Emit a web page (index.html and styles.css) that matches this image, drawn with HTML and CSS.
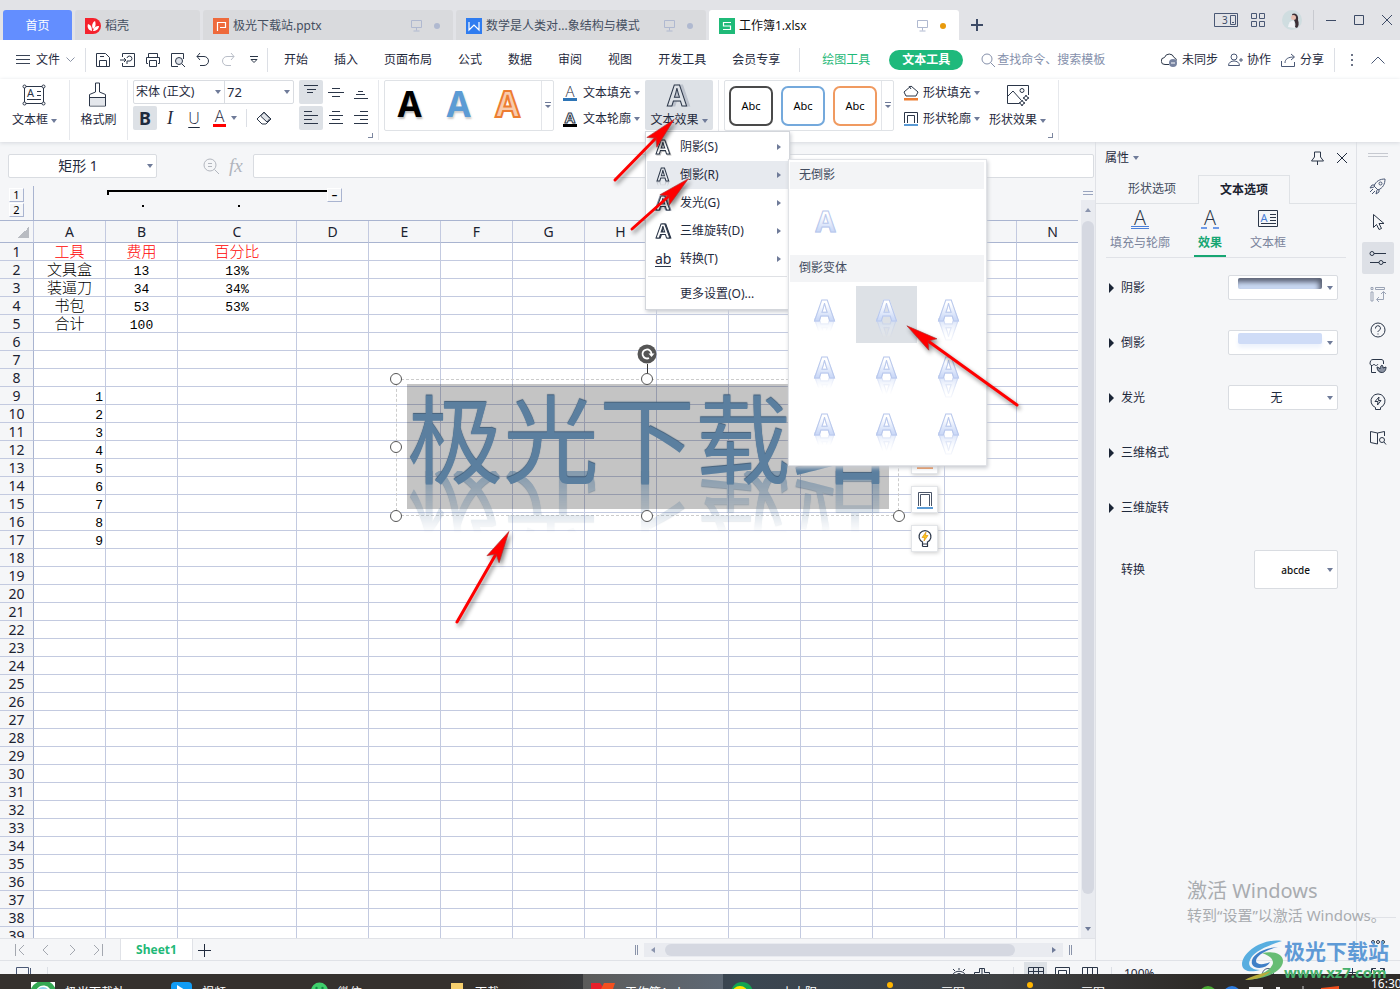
FILE: index.html
```html
<!DOCTYPE html>
<html lang="zh-CN">
<head>
<meta charset="utf-8">
<title>工作簿1.xlsx</title>
<link rel="stylesheet" href="styles.css">
</head>
<body>
<svg class="defs" aria-hidden="true">
  <defs>
    <marker id="head" markerUnits="userSpaceOnUse" markerWidth="60" markerHeight="40" orient="auto" overflow="visible"><path d="M0 0 L-6 -7 L26 0 L-6 7Z" fill="#f00" stroke="#a33" stroke-width=".6"/></marker>
    <symbol id="i-monitor" viewBox="0 0 12 12"><path d="M.5 .5h10v7h-10zM5.500 7.500v3M2.500 11h6" fill="none" stroke="#b0b9d0"/></symbol>
    <symbol id="i-plus" viewBox="0 0 14 14"><path d="M7.500 1v13M1 7.500h13" fill="none" stroke="currentColor"/></symbol>
    <symbol id="i-x" viewBox="0 0 12 12"><path d="M1 1l10 10M11 1L1 11" fill="none" stroke="currentColor"/></symbol>
    <symbol id="i-outline" viewBox="0 0 16 16"><path d="M1.500 12V1.500h13V12M4.500 12V4.500h7V12" fill="none" stroke="#2b3648"/><path d="M1 13h14v2H1z" fill="#5b9bd5"/></symbol>
  </defs>
</svg>
<div class="app">
  <header class="titlebar">
    <nav class="doc-tabs">
      <button class="doc-tab home">首页</button>
      <button class="doc-tab shell"><svg width="16" height="16" viewBox="0 0 16 16"><path d="M0 3V0h8a8 8 0 1 1 0 16H0z" fill="#f5222d"/><path d="M7 13C3 12 2 9 3 6c3 1 4 3 4 7zM8 11C6 7 8 4 10 3c1 3 1 6-2 8zM8 13c1-4 3-5 6-5 0 3-3 5-6 5z" fill="#fff"/></svg>稻壳</button>
      <button class="doc-tab doc"><svg width="16" height="16" viewBox="0 0 16 16"><path d="M0 0h16v16H0z" fill="#ee6a3c"/><path d="M4.500 13V4.500h8v5H7" fill="none" stroke="#fff" stroke-width="1.200"/></svg><span class="doc-name">极光下载站.pptx</span><svg width="12" height="12"><use href="#i-monitor"/></svg><i class="dot"></i></button>
      <button class="doc-tab doc"><svg width="16" height="16" viewBox="0 0 16 16"><path d="M0 0h16v16H0z" fill="#2f7cf0"/><path d="M3 4v8l5-5 5 5V4" fill="none" stroke="#fff" stroke-width="1.200"/></svg><span class="doc-name">数学是人类对...象结构与模式</span><svg width="12" height="12"><use href="#i-monitor"/></svg><i class="dot"></i></button>
      <button class="doc-tab doc active"><svg width="16" height="16" viewBox="0 0 16 16"><path d="M0 0h16v16H0z" fill="#1fba78"/><path d="M12 4.500H4.500v3.500h7v3.500H4" fill="none" stroke="#fff" stroke-width="1.200"/></svg><span class="doc-name">工作簿1.xlsx</span><svg width="12" height="12"><use href="#i-monitor"/></svg><i class="dot"></i></button>
      <button class="new-tab" aria-label="新建"><svg width="14" height="14" viewBox="0 0 14 14"><path d="M7 1v12M1 7h12" stroke="#3d4b66" stroke-width="2"/></svg></button>
    </nav>
    <div class="window-tools">
      <svg class="count" width="24" height="14" viewBox="0 0 24 14"><path d="M.5 .5h23v13H.5zM16.500 2.500h5v9h-5zM18 9.500h2" fill="none" stroke="#4a5875"/><text x="8" y="11" font-size="10" fill="#3d4b66">3</text></svg>
      <svg width="15" height="15" viewBox="0 0 15 15"><path d="M.5 .5h5v5h-5zM8.500 .5h5v5h-5zM.5 8.500h5v5h-5zM8.500 8.500h5v5h-5z" fill="none" stroke="#4a5875"/></svg>
      <svg width="20" height="20" viewBox="0 0 20 20"><circle cx="10" cy="10" r="10" fill="#cfdde0"/><path d="M10 4c4-2 7 2 6 6 1 3 1 6-1 8l-2-1c1-3 0-5-1-7z" fill="#3b3036"/><circle cx="11.500" cy="7.500" r="2.500" fill="#e8bfb0"/><path d="M6 17c1-5 3-7 6-6l1 7z" fill="#f1f3f6"/></svg>
      <i class="vline"></i>
      <button aria-label="最小化"><svg width="12" height="12" viewBox="0 0 12 12"><path d="M1 6.500h10" stroke="#3d4b66"/></svg></button>
      <button aria-label="最大化"><svg width="12" height="12" viewBox="0 0 12 12"><path d="M1.500 1.500h9v9h-9z" fill="none" stroke="#3d4b66"/></svg></button>
      <button aria-label="关闭"><svg width="12" height="12"><use href="#i-x"/></svg></button>
    </div>
  </header>

  <div class="menubar">
    <button class="file"><svg width="14" height="11" viewBox="0 0 14 11"><path d="M0 1.500h14M0 5.500h14M0 9.500h14" stroke="#3a4456"/></svg>文件<svg width="9" height="6" viewBox="0 0 9 6"><path d="M.5 .5l4 4 4-4" fill="none" stroke="#8a93a5"/></svg></button>
    <i class="vline"></i>
    <div class="quick">
      <button aria-label="保存"><svg width="16" height="16" viewBox="0 0 16 16"><path d="M1.500 1.500h9l4 4v9h-13zM4.500 14V8.500h7V14M5 4.500h4" fill="none" stroke="#2b3648"/></svg></button>
      <button aria-label="输出"><svg width="16" height="16" viewBox="0 0 16 16"><path d="M2.500 5V1.500h12v13h-12V11M0 8h6M4 6l2 2-2 2M7 12V9h3a2.500 2.500 0 1 0-3-3" fill="none" stroke="#2b3648"/></svg></button>
      <button aria-label="打印"><svg width="16" height="16" viewBox="0 0 16 16"><path d="M3.500 5V1.500h9V5M3 11.500H1.500v-6h13v6H13M4.500 8.500h7v6h-7z" fill="none" stroke="#2b3648"/></svg></button>
      <button aria-label="预览"><svg width="16" height="16" viewBox="0 0 16 16"><path d="M8 14.500H1.500v-13h12V7M12 12l3 3" fill="none" stroke="#2b3648"/><circle cx="9" cy="9" r="3.500" fill="#dfe3ea" stroke="#2b3648"/></svg></button>
      <button aria-label="撤销"><svg width="16" height="16" viewBox="0 0 16 16"><path d="M5 1L2 4.500 5 8M2 4.500h7a4.500 4.500 0 0 1 0 9H5" fill="none" stroke="#2b3648"/></svg></button>
      <button aria-label="恢复"><svg width="16" height="16" viewBox="0 0 16 16"><path d="M11 1l3 3.500L11 8M14 4.500H7a4.500 4.500 0 0 0 0 9h4" fill="none" stroke="#b9bec8"/></svg></button>
      <button aria-label="更多"><svg width="8" height="8" viewBox="0 0 8 8"><path d="M0 .5h8M1 3.500l3 3 3-3z" fill="none" stroke="#2b3648"/></svg></button>
    </div>
    <i class="vline"></i>
    <nav class="ribbon-tabs">
      <button>开始</button><button>插入</button><button>页面布局</button><button>公式</button><button>数据</button><button>审阅</button><button>视图</button><button>开发工具</button><button>会员专享</button>
    </nav>
    <i class="vline"></i>
    <button class="draw-tab">绘图工具</button>
    <button class="text-tab">文本工具</button>
    <label class="search"><svg width="14" height="14" viewBox="0 0 14 14"><circle cx="6" cy="6" r="5" fill="none" stroke="#8691ab"/><path d="M9.500 9.500L14 14" stroke="#8691ab"/></svg><input type="text" placeholder="查找命令、搜索模板"></label>
    <div class="share-tools">
      <button><svg width="17" height="16" viewBox="0 0 17 16"><path d="M8 12.500H4a3.500 3.500 0 0 1-.5-7 5 5 0 0 1 9.500 0 3.500 3.500 0 0 1 2.500 3" fill="none" stroke="#2b3648"/><circle cx="12" cy="11" r="4" fill="#7783a0"/><path d="M10 11h4" stroke="#fff"/></svg>未同步</button>
      <button><svg width="15" height="14" viewBox="0 0 15 14"><circle cx="6" cy="4" r="3" fill="none" stroke="#4a5875"/><path d="M.5 12.500c0-6 11-6 11 0zM11 7h4M13 5v4" fill="none" stroke="#4a5875"/></svg>协作</button>
      <button><svg width="15" height="14" viewBox="0 0 15 14"><path d="M.5 8v5.500h13V9M4 10c0-4 3-6 9-6M10 1l3.500 3L10 7" fill="none" stroke="#4a5875"/></svg>分享</button>
      <i class="vline"></i>
      <svg class="dots" width="4" height="14" viewBox="0 0 4 14"><path d="M1 1h2v2H1zM1 6h2v2H1zM1 11h2v2H1z" fill="#6b7386"/></svg>
      <svg width="14" height="8" viewBox="0 0 14 8"><path d="M.5 7.500L7 1l6.500 6.500" fill="none" stroke="#4a5875"/></svg>
    </div>
  </div>

  <div class="ribbon">
    <div class="group g-textbox"><button class="big"><svg width="24" height="22" viewBox="0 0 24 22"><path d="M2.500 2.500h19v17h-19zM15 7.500h4M15 11.500h4M5 15.500h14" fill="none" stroke="#2b3648"/><g fill="#fff" stroke="#2b3648"><circle cx="2.500" cy="2.500" r="1.500"/><circle cx="21.500" cy="2.500" r="1.500"/><circle cx="2.500" cy="19.500" r="1.500"/><circle cx="21.500" cy="19.500" r="1.500"/></g><text x="5" y="13" font-size="11" fill="#2b3648">A</text></svg><span>文本框<i class="caret"></i></span></button></div>
    <div class="group g-brush"><button class="big"><svg width="20" height="26" viewBox="0 0 20 26"><path d="M7.500 1h4v9l6 2.500v11.500h-16V12.500l6-2.500z" fill="none" stroke="#2b3648"/><path d="M2 16h15v7.500H2z" fill="#e4e7ec"/><path d="M1 15.500h17" stroke="#2b3648"/></svg><span>格式刷</span></button></div>
    <div class="group g-font">
      <div class="stack">
        <div class="font-row"><label class="combo font-name"><select aria-label="字体"><option>宋体 (正文)</option></select><i class="caret"></i></label><label class="combo font-size"><select aria-label="字号"><option>72</option></select><i class="caret"></i></label></div>
        <div class="format-row">
          <button class="sq on bold">B</button><button class="sq italic">I</button><button class="sq under">U</button>
          <button class="color-btn"><span>A</span><i class="caret"></i></button><i class="vline"></i>
          <button class="sq" aria-label="清除格式"><svg width="16" height="14" viewBox="0 0 16 14"><path d="M1 8l7-7 7 7-5 5H6z" fill="none" stroke="#2b3648"/><path d="M4.500 5L8 1.500l6 6L11 11z" fill="#e0e3e8" stroke="#2b3648"/></svg></button>
        </div>
      </div>
      <div class="aligns">
        <button class="sq on" aria-label="顶端对齐"><svg width="14" height="16" viewBox="0 0 14 16"><path d="M0 1.500h14M3 5.500h9M3 8.500h6" stroke="#2b3648"/></svg></button>
        <button class="sq" aria-label="垂直居中"><svg width="16" height="16" viewBox="0 0 16 16"><path d="M4 4.500h8M0 8.500h16M4 12.500h8" stroke="#2b3648"/></svg></button>
        <button class="sq" aria-label="底端对齐"><svg width="14" height="16" viewBox="0 0 14 16"><path d="M4 7.500h5M2 10.500h9M0 14.500h14" stroke="#2b3648"/></svg></button>
        <button class="sq on" aria-label="左对齐"><svg width="14" height="14" viewBox="0 0 14 14"><path d="M0 .5h8M0 4.500h14M0 8.500h8M0 12.500h14" stroke="#2b3648"/></svg></button>
        <button class="sq" aria-label="居中"><svg width="14" height="14" viewBox="0 0 14 14"><path d="M3 .5h8M0 4.500h14M3 8.500h8M0 12.500h14" stroke="#2b3648"/></svg></button>
        <button class="sq" aria-label="右对齐"><svg width="14" height="14" viewBox="0 0 14 14"><path d="M6 .5h8M0 4.500h14M6 8.500h8M0 12.500h14" stroke="#2b3648"/></svg></button>
      </div>
      <i class="corner"></i>
    </div>
    <div class="group g-text">
      <div class="gallery art"><div class="cells"><button class="art-black">A</button><button class="art-blue">A</button><button class="art-orange">A</button></div><button class="more" aria-label="更多样式"><i class="caret"></i></button></div>
      <div class="stack list">
        <button class="row-btn"><span class="ic-a fill">A</span>文本填充<i class="caret"></i></button>
        <button class="row-btn"><span class="ic-a line">A</span>文本轮廓<i class="caret"></i></button>
      </div>
      <div class="effect-wrap">
        <button class="big effect"><span class="hollow">A</span><span>文本效果<i class="caret"></i></span></button>
        <div class="menu">
          <button><span class="m-a shade">A</span>阴影(S)<i class="arrow"></i></button>
          <button class="hover"><span class="m-a refl">A</span>倒影(R)<i class="arrow"></i></button>
          <button><span class="m-a glow">A</span>发光(G)<i class="arrow"></i></button>
          <button><span class="m-a rot">A</span>三维旋转(D)<i class="arrow"></i></button>
          <button><span class="m-ab">ab</span>转换(T)<i class="arrow"></i></button>
          <hr>
          <button class="more-set"><span class="m-a"></span>更多设置(O)...</button>
          <div class="submenu">
            <h3>无倒影</h3>
            <div class="none-row"><button class="cell"><span>A</span></button></div>
            <h3>倒影变体</h3>
            <div class="variants">
              <button class="cell r1"><span>A</span></button><button class="cell r2 picked"><span>A</span></button><button class="cell r3"><span>A</span></button>
              <button class="cell r1"><span>A</span></button><button class="cell r2"><span>A</span></button><button class="cell r3"><span>A</span></button>
              <button class="cell r1"><span>A</span></button><button class="cell r2"><span>A</span></button><button class="cell r3"><span>A</span></button>
            </div>
          </div>
        </div>
      </div>
    </div>
    <div class="group g-shape">
      <div class="gallery abc"><div class="cells"><button class="k">Abc</button><button class="b">Abc</button><button class="o">Abc</button></div><button class="more" aria-label="更多样式"><i class="caret"></i></button></div>
      <div class="stack list">
        <button class="row-btn"><svg width="16" height="16" viewBox="0 0 16 16"><path d="M1 7l7-6 7 6-2 4H3zM6 1l2 3" fill="none" stroke="#2b3648"/><path d="M1 13h14v2.500H1z" fill="#ed7d31"/></svg>形状填充<i class="caret"></i></button>
        <button class="row-btn"><svg width="16" height="16"><use href="#i-outline"/></svg>形状轮廓<i class="caret"></i></button>
      </div>
      <button class="big shape-effect"><svg width="24" height="22" viewBox="0 0 24 22"><path d="M13 19.500H1.500v-18h21V11M2 12l5-5 8 9" fill="none" stroke="#2b3648"/><circle cx="16" cy="6.500" r="2" fill="none" stroke="#2b3648"/><path d="M20 11l1 2 2 1-2 1-1 2-1-2-2-1 2-1zM16 16l1 2 2 1-2 1-1 2-1-2-2-1 2-1z" fill="#fff" stroke="#2b3648"/></svg><span>形状效果<i class="caret"></i></span></button>
      <i class="corner"></i>
    </div>
  </div>

  <main class="workspace">
    <section class="book">
      <div class="formula-bar">
        <label class="combo name-box"><select aria-label="名称框"><option>矩形 1</option></select><i class="caret"></i></label>
        <div class="fx-tools"><svg width="17" height="17" viewBox="0 0 17 17"><circle cx="7" cy="7" r="6" fill="none" stroke="#b3b7bf"/><path d="M5 5.500h4M5 8.500h4M11.500 11.500L16 16" stroke="#b3b7bf" fill="none"/></svg><span class="fx">fx</span></div>
        <input class="formula" type="text" aria-label="编辑栏">
      </div>
      <div class="sheet-row">
        <div class="sheet">
          <div class="outline">
            <div class="levels"><button>1</button><button>2</button></div>
            <div class="bracket-area"><div class="bracket"></div><button class="minus">–</button><i class="pt pt-b"></i><i class="pt pt-c"></i></div>
          </div>
          <div class="grid-wrap">
            <table class="grid"><thead></thead><tbody></tbody></table>
            <div class="shape">
              <div class="selection"></div>
              <div class="wordart">极光下载站</div>
              <i class="stem"></i>
              <svg class="rotate" width="20" height="20" viewBox="0 0 20 20"><circle cx="10" cy="10" r="9.500" fill="#555"/><path d="M12 14a4.500 4.500 0 1 1 2.500-4" fill="none" stroke="#fff" stroke-width="1.800"/><path d="M11.500 9.500h6l-3 3.500z" fill="#fff"/></svg>
              <i class="knob tl"></i><i class="knob tc"></i><i class="knob ml"></i><i class="knob bl"></i><i class="knob bc"></i><i class="knob br"></i>
              <div class="float-tools">
                <button aria-label="形状填充"><svg width="16" height="20" viewBox="0 0 16 20"><path d="M2 7l6-5 6 5-2 6H4z" fill="none" stroke="#2b3648"/><path d="M0 16h16v2H0z" fill="#ed7d31"/></svg></button>
                <button aria-label="形状轮廓"><svg width="16" height="18" viewBox="0 0 16 18"><path d="M1.500 15V1.500h13V15M3.500 15V3.500h9V15" fill="none" stroke="#4a5568"/><path d="M0 16h16v2H0z" fill="#5b9bd5"/></svg></button>
                <button aria-label="智能"><svg width="16" height="20" viewBox="0 0 16 20"><path d="M5.500 15v-2a6 6 0 1 1 5 0v2zM5.500 17.500h5v-2.500M5.500 15v2.500" fill="#fff" stroke="#2b3648" stroke-width="1.200"/><path d="M9 3L5 8.500h2.500L7 12l4-5.500H8.500z" fill="#ffc61a" stroke="#d98a00" stroke-width=".6"/></svg></button>
              </div>
            </div>
          </div>
        </div>
        <div class="vscroll"><i class="split"></i><div class="track"><i class="caret up"></i><i class="thumb"></i><i class="caret"></i></div></div>
      </div>
      <div class="sheet-tabs">
        <div class="navs">
          <svg width="10" height="12" viewBox="0 0 10 12"><path d="M.5 0v12M9 1L4 6l5 5" fill="none" stroke="#a4a8b0"/></svg>
          <svg width="10" height="12" viewBox="0 0 10 12"><path d="M7 1L2 6l5 5" fill="none" stroke="#a4a8b0"/></svg>
          <svg width="10" height="12" viewBox="0 0 10 12"><path d="M3 1l5 5-5 5" fill="none" stroke="#a4a8b0"/></svg>
          <svg width="10" height="12" viewBox="0 0 10 12"><path d="M9.500 0v12M1 1l5 5-5 5" fill="none" stroke="#a4a8b0"/></svg>
        </div>
        <button class="sheet-tab">Sheet1</button>
        <button class="add-sheet" aria-label="新建工作表"><svg width="14" height="14"><use href="#i-plus"/></svg></button>
        <div class="hscroll"><i class="grip"></i><div class="track"><i class="arrow left"></i><i class="thumb"></i><i class="arrow"></i></div><i class="grip"></i></div>
      </div>
    </section>

    <aside class="panel">
      <div class="panel-head"><span>属性<i class="caret"></i></span><div class="panel-acts"><svg width="13" height="14" viewBox="0 0 13 14"><path d="M3.500 1h6v5l3 4H.5l3-4zM6.500 10v4" fill="none" stroke="#2b3648"/></svg><button aria-label="关闭"><svg width="12" height="12"><use href="#i-x"/></svg></button></div></div>
      <div class="panel-tabs"><button>形状选项</button><button class="active">文本选项</button></div>
      <div class="sub-tabs">
        <button class="wide"><span class="thin-a bar">A</span>填充与轮廓</button>
        <button class="active"><span class="thin-a dashes">A</span>效果</button>
        <button class="frame"><svg width="20" height="20" viewBox="0 0 20 20"><path d="M.5 1.500h19v16H.5zM12 5.500h6M12 8.500h6M12 11.500h6M3 14.500h15" fill="none" stroke="#2b3648"/><text x="2.500" y="12.500" font-size="11" fill="#4a7fd8">A</text></svg>文本框</button>
      </div>
      <div class="props">
        <div class="prop"><i class="tri"></i><span>阴影</span><button class="pick" aria-label="阴影"><i class="sw sw-shadow"></i><i class="caret"></i></button></div>
        <div class="prop"><i class="tri"></i><span>倒影</span><button class="pick" aria-label="倒影"><i class="sw sw-refl"></i><i class="caret"></i></button></div>
        <div class="prop"><i class="tri"></i><label for="glow">发光</label><div class="combo pick"><select id="glow"><option>无</option></select><i class="caret"></i></div></div>
        <div class="prop"><i class="tri"></i><span>三维格式</span></div>
        <div class="prop"><i class="tri"></i><span>三维旋转</span></div>
        <div class="prop last"><i class="tri hidden"></i><span>转换</span><button class="pick tall">abcde<i class="caret"></i></button></div>
      </div>
    </aside>

    <aside class="rail">
      <i class="handle"></i>
      <button aria-label="推荐"><svg width="18" height="18" viewBox="0 0 18 18"><path d="M5 9c2-5 6-7 11-7 0 5-2 9-7 11zM6 8H3l-2 3 4-1M10 12v3l-3 2 1-4M4 12l-3 3M6 14l-3 3" fill="none" stroke="#4a5875"/><circle cx="11.500" cy="6.500" r="1.500" fill="none" stroke="#4a5875"/></svg></button>
      <button aria-label="选择"><svg width="16" height="18" viewBox="0 0 16 18"><path d="M3.500 1.500v13l3-3 2.500 5 2.500-1-2.500-5h5z" fill="none" stroke="#2b3648"/></svg></button>
      <button class="on" aria-label="属性"><svg width="18" height="16" viewBox="0 0 18 16"><path d="M5 3.500h12M1 12.500h9M14 12.500h3" stroke="#2b3648"/><circle cx="3" cy="3.500" r="2" fill="none" stroke="#2b3648"/><circle cx="12" cy="12.500" r="2" fill="none" stroke="#2b3648"/></svg></button>
      <button aria-label="样式"><svg width="16" height="16" viewBox="0 0 16 16"><path d="M1 1.500h2v2H1zM5.500 1.500h9v2h-9zM1 6h2v9H1zM13.500 6v7.500H7M11 8l2.500-2.500L16 8M9 11l-2.500 2.500L9 16" fill="none" stroke="#9aa3b5"/></svg></button>
      <button aria-label="帮助"><svg width="16" height="16" viewBox="0 0 16 16"><circle cx="8" cy="8" r="7" fill="none" stroke="#2b3648"/><path d="M5.500 6.500a2.500 2.500 0 1 1 3.500 2c-1 .5-1 1-1 1.500M8 11.500v1" fill="none" stroke="#2b3648"/></svg></button>
      <button aria-label="素材"><svg width="18" height="16" viewBox="0 0 18 16"><path d="M7 14.500H2.500V7M14.500 6V4c0-2-1-2.500-2.500-2.500H4C2 1.500 1 3 1 6c1 2 3 2 4 0 1 2 3 2 4 0" fill="none" stroke="#2b3648"/><path d="M8 9c1.500 0 2 1 3 2 0-2 1-3.500 2-4 1 1 1 2 1 3l3-1c0 4-2 5.500-4 5.500-3 0-5-2-5-5.500z" fill="#8b93a3" stroke="#2b3648"/></svg></button>
      <button aria-label="灵感"><svg width="16" height="18" viewBox="0 0 16 18"><path d="M5.500 14.500a7 7 0 1 1 5 0v2h-5z" fill="none" stroke="#2b3648"/><path d="M9 4L5 8.500h3L7.500 12l3.500-4.500H8.500z" fill="none" stroke="#2b3648"/></svg></button>
      <button aria-label="查阅"><svg width="18" height="16" viewBox="0 0 18 16"><path d="M8.500 14l-7-1.500V1.500l7 1.500 7-1.500V6M8.500 3v11" fill="none" stroke="#2b3648"/><circle cx="13" cy="10" r="2.500" fill="none" stroke="#2b3648"/><path d="M15 12l2 2.500" stroke="#2b3648"/></svg></button>
      <div class="rail-end"><svg width="16" height="6" viewBox="0 0 16 6"><g fill="none" stroke="#2b3648"><circle cx="3" cy="3" r="1.500"/><circle cx="8" cy="3" r="1.500"/><circle cx="13" cy="3" r="1.500"/></g></svg></div>
    </aside>
  </main>

  <footer class="status">
    <svg class="rec" width="17" height="14" viewBox="0 0 17 14"><path d="M.5 14V.5h12V14M14.500 1v13" fill="none" stroke="#4a5875"/></svg>
    <i class="vline"></i>
    <div class="views">
      <svg width="16" height="14" viewBox="0 0 16 14"><path d="M1 7c4-5 10-5 14 0M8 0v2M2 1l2 2M14 1l-2 2" fill="none" stroke="#2b3648"/><circle cx="8" cy="8" r="2.500" fill="none" stroke="#2b3648"/></svg>
      <svg class="cross" width="16" height="14" viewBox="0 0 16 14"><path d="M.5 14V4.500h5v-4h5v4h5V14M8 1v13" fill="none" stroke="#2b3648"/></svg>
      <i class="vline"></i>
      <span class="view on"><svg width="16" height="12" viewBox="0 0 16 12"><path d="M.5 .5h15v11H.5zM0 4.500h16M5.500 0v12M10.500 0v12" fill="none" stroke="#2b3648"/></svg></span>
      <span class="view"><svg width="15" height="12" viewBox="0 0 15 12"><path d="M.5 12V.5h14V12M3.500 12V3.500h8V12" fill="none" stroke="#2b3648"/></svg></span>
      <span class="view"><svg width="16" height="12" viewBox="0 0 16 12"><path d="M.5 .5h15v11H.5zM5.500 0v12M10.500 0v12" fill="none" stroke="#2b3648"/></svg></span>
      <i class="vline"></i>
      <span class="zoom">100%</span>
      <svg class="slider" width="12" height="12" viewBox="0 0 12 12"><circle cx="6" cy="6" r="5.500" fill="#fff" stroke="#4a5875"/></svg>
      <svg class="plus" width="9" height="9" viewBox="0 0 9 9"><path d="M4.500 0v9M0 4.500h9" stroke="#2b3648"/></svg>
      <svg class="full" width="14" height="14" viewBox="0 0 14 14"><path d="M.5 5V.5H5M9 .5h4.500V5M1 1l4 4M13 1L9 5" fill="none" stroke="#2b3648"/></svg>
    </div>
  </footer>

  <footer class="taskbar">
    <div class="task"><svg width="24" height="15" viewBox="0 0 24 15"><path d="M0 0h24v15H0z" fill="#fff"/><path d="M2 8C8-2 20-1 23 10" fill="none" stroke="#34a853" stroke-width="5"/><circle cx="12" cy="12" r="7" fill="#8fd0e8"/></svg><span>极光下载站</span></div>
    <div class="task"><svg width="21" height="15" viewBox="0 0 21 15"><rect width="21" height="21" rx="4" fill="#119cf5"/><path d="M6 3l8 5-8 5z" fill="#fff"/></svg><span>视频</span></div>
    <div class="task"><svg width="17" height="15" viewBox="0 0 17 15"><circle cx="8.500" cy="9" r="8.500" fill="#3fcf6c"/><circle cx="5.500" cy="6" r="1.200" fill="#184"/><circle cx="11.500" cy="6" r="1.200" fill="#184"/></svg><span>微信</span></div>
    <div class="task folder"><svg width="14" height="15" viewBox="0 0 14 15"><path d="M0 1h12v14H0z" fill="#f6cf6d"/></svg><span>下载</span></div>
    <div class="task current"><svg width="24" height="15" viewBox="0 0 24 15"><path d="M0 1h9l3 4-5 10H0z" fill="#e8202a"/><path d="M13 1h11l-2 6H10z" fill="#f2501f"/></svg><span>工作簿1.xlsx</span></div>
    <div class="task sun"><svg width="22" height="15" viewBox="0 0 22 15"><circle cx="11" cy="11" r="11" fill="#12a551"/><circle cx="9" cy="12" r="8" fill="#ffe500"/></svg><span>小太阳</span></div>
    <div class="task paint"><svg width="22" height="15" viewBox="0 0 22 15"><circle cx="19" cy="3" r="3" fill="#ffb400"/></svg><span>画图</span></div>
    <div class="task paint"><svg width="22" height="15" viewBox="0 0 22 15"><circle cx="19" cy="3" r="3" fill="#ffb400"/></svg><span>画图</span></div>
    <div class="tray"><svg width="150" height="15" viewBox="0 0 150 15"><circle cx="15" cy="21" r="9" fill="#4bab35"/><circle cx="13" cy="20" r="5" fill="#ffe500"/><circle cx="39" cy="21" r="9" fill="#2d7de0"/><path d="M56 13h14v2H56zM83 13h4v2h-4z" fill="#eee"/><path d="M110 12v3" stroke="#ccc"/><path d="M128 14l18-2v3h-18z" fill="#f2501f"/></svg><time>16:30</time></div>
  </footer>

  <div class="activate"><strong>激活 Windows</strong><span>转到“设置”以激活 Windows。</span></div>
  <div class="site-mark">
    <svg width="44" height="42" viewBox="0 0 44 42"><path d="M42 2C24-1 3 12 2 25c0 7 8 9 18 6C12 31 7 27 10 21 13 13 26 7 42 2z" fill="#58aee0"/><path d="M22 14c10-2 21 0 21 8 0 9-14 18-38 19 13-4 27-10 28-17 0-5-5-8-11-10z" fill="#67bd74"/><path d="M38 8C25 11 16 17 16 22c0 4 8 4 14 1-3 7-16 8-18 2C10 18 20 9 38 8z" fill="#3f7fc6"/><path d="M5 41c8-5 17-6 26-9-5 5-15 9-26 9z" fill="#b9ad3b"/></svg>
    <div><strong>极光下载站</strong><span>www.xz7.com</span></div>
  </div>
  <svg class="arrows" aria-hidden="true">
    <g stroke="#f00" stroke-width="3" stroke-linecap="round">
      <line x1="615" y1="180" x2="656" y2="138" marker-end="url(#head)"/>
      <line x1="632" y1="229" x2="669" y2="196" marker-end="url(#head)"/>
      <line x1="1017" y1="405" x2="928" y2="341" marker-end="url(#head)"/>
      <line x1="457" y1="622" x2="496" y2="554" marker-end="url(#head)"/>
    </g>
  </svg>
</div>
<script src="grid.js"></script>
</body>
</html>
```
FILE: grid.js
```js
const columns = ['A','B','C','D','E','F','G','H','I','J','K','L','M','N'];
const data = {
  1: ['工具', '费用', '百分比'],
  2: ['文具盒', '13', '13%'],
  3: ['装逼刀', '34', '34%'],
  4: ['书包', '53', '53%'],
  5: ['合计', '100', '']
};
const head = document.querySelector('.grid thead');
const body = document.querySelector('.grid tbody');
head.innerHTML = '<tr><th class="all"></th>' + columns.map(c => `<th class="col-${c}">${c}</th>`).join('') + '</tr>';
let rows = '';
for (let r = 1; r <= 39; r++) {
  rows += `<tr class="${r === 1 ? 'title' : ''}"><th>${r}</th>`;
  columns.forEach((c, i) => {
    let value = (data[r] && data[r][i]) || '';
    let cls = /^\d/.test(value) ? 'num' : '';
    if (i === 0 && r >= 9 && r <= 17) { value = r - 8; cls = 'num right'; }
    rows += `<td class="${cls}">${value}</td>`;
  });
  rows += '</tr>';
}
body.innerHTML = rows;
```
FILE: styles.css
```css
* { box-sizing: border-box; }
body { margin: 0; font: 12px/16px "Noto Sans", "Noto Sans CJK SC", sans-serif; color: #1f2a3d; overflow: hidden; }
button, input, select { font: inherit; color: inherit; margin: 0; padding: 0; border: 0; background: none; border-radius: 0; }
button { white-space: nowrap; }
select { appearance: none; outline: 0; }
i { display: block; flex: none; }
svg { display: block; flex: none; }
.defs { position: absolute; width: 0; height: 0; }
.app { position: relative; display: flex; flex-direction: column; height: 100vh; overflow: hidden; background: #f5f6f8; }
.vline { width: 1px; height: 24px; background: #dcdfe5; }
.caret { display: inline-block; width: 0; height: 0; border: 3px solid transparent; border-top: 4px solid #6f7b99; border-bottom: 0; vertical-align: middle; }
.caret.up { border-top: 0; border-bottom: 4px solid #8b95ae; }
.arrow { width: 0; height: 0; border: 3px solid transparent; border-left: 4px solid #6f7b99; border-right: 0; }
.arrow.left { border-left: 0; border-right: 4px solid #8b95ae; }

/* title bar */
.titlebar { display: flex; justify-content: space-between; height: 40px; background: #e2e3e7; }
.doc-tabs { display: flex; align-items: flex-end; gap: 3px; padding-left: 3px; }
.doc-tab { display: flex; align-items: center; gap: 4px; height: 30px; padding: 2px 13px 0 10px; background: #d9dadd; border-radius: 3px 3px 0 0; color: #444e60; }
.doc-tab.home { width: 69px; justify-content: center; padding: 2px 0 0; background: #638eff; color: #fff; }
.doc-tab.shell { width: 125px; }
.doc-tab.doc { width: 250px; }
.doc-tab .doc-name { flex: 1; text-align: left; }
.doc-tab.active { background: #fff; color: #111; }
.dot { width: 6px; height: 6px; margin-left: 7px; border-radius: 50%; background: #b0b9d0; }
.active .dot { background: #e89a0c; }
.new-tab { width: 30px; height: 30px; display: grid; place-items: center; }
.window-tools { display: flex; align-items: center; gap: 16px; padding-right: 7px; color: #3d4b66; }
.window-tools .vline { height: 20px; margin: 0 -5px; background: #c8cad0; }
.window-tools .count { margin-right: -3px; }

/* menu bar */
.menubar { display: flex; align-items: center; height: 39px; background: #fff; }
.file { display: flex; align-items: center; gap: 6px; padding: 0 10px 0 16px; }
.quick { display: flex; align-items: center; gap: 9px; padding: 0 9px 0 9px; }
.quick button:last-child { padding: 0 0 0 5px; }
.ribbon-tabs { display: flex; gap: 26px; padding: 0 19px 0 16px; }
.draw-tab { margin-left: 22px; color: #1fb978; }
.text-tab { margin-left: 19px; padding: 2px 13px; border-radius: 10px; background: #1fb97c; color: #fff; font-weight: 700; }
.search { display: flex; align-items: center; gap: 2px; margin-left: 18px; }
.search input { width: 130px; outline: 0; }
.search input::placeholder { color: #8590ab; opacity: 1; }
.share-tools { display: flex; align-items: center; gap: 10px; margin-left: auto; padding-right: 15px; }
.share-tools button { display: flex; align-items: center; gap: 4px; }
.share-tools .dots { margin: 0 7px 0 5px; }

/* ribbon */
.ribbon { position: relative; z-index: 5; display: flex; height: 63px; padding-top: 1px; background: #fff; box-shadow: 0 1px 4px #d5d8de; }
.group { position: relative; display: flex; align-items: flex-start; height: 60px; border-right: 1px solid #e6e8ec; }
.big { display: flex; flex-direction: column; align-items: center; justify-content: space-between; height: 50px; padding-top: 4px; line-height: 20px; }
.big .caret, .row-btn .caret { margin-left: 3px; }
.g-textbox { width: 70px; justify-content: center; }
.g-brush { width: 58px; justify-content: center; }
.g-brush .big { padding-top: 2px; }
.g-font { width: 251px; padding-left: 5px; gap: 5px; }
.stack { display: flex; flex-direction: column; gap: 2px; }
.font-row { display: flex; width: 161px; height: 24px; border: 1px solid #d9dce1; border-radius: 2px; }
.combo { display: flex; align-items: center; }
.combo select { flex: 1; min-width: 0; height: 100%; }
.font-name { width: 91px; padding: 0 3px 0 2px; border-right: 1px solid #d9dce1; }
.font-size { flex: 1; padding: 0 3px 0 2px; }
.font-size select { font-size: 13px; }
.format-row { display: flex; align-items: center; height: 24px; }
.sq { display: grid; place-items: center; width: 24px; height: 24px; border-radius: 2px; }
.sq.on { background: #dde1e6; }
.bold { font-size: 18px; font-weight: 700; }
.italic { margin-left: 1px; font: italic 18px "Liberation Serif", serif; }
.under { font: 300 16px/18px "Open Sans", sans-serif; text-decoration: underline; text-underline-offset: 3px; }
.color-btn { display: flex; align-items: center; gap: 5px; margin: 0 9px 0 7px; font: 300 16px/16px "Open Sans", sans-serif; }
.color-btn span { width: 13px; height: 17px; border-bottom: 3px solid #f00; line-height: 13px; }
.format-row .vline { height: 18px; margin-right: 5px; }
.aligns { display: grid; grid-template-columns: repeat(3, 24px); gap: 2px 1px; }
.corner { position: absolute; right: 5px; bottom: 2px; width: 5px; height: 5px; border: 1px solid #7b869f; border-top: 0; border-left: 0; }
.gallery { display: flex; width: 170px; height: 51px; border: 1px solid #dfe2e6; border-radius: 2px; }
.cells { flex: 1; display: flex; align-items: center; }
.more { width: 12px; border-left: 1px solid #e3e5e9; }
.more .caret { border-width: 3px 3px 0; position: relative; }
.more .caret::before { content: ""; position: absolute; left: -3px; top: -6px; width: 6px; height: 1px; background: #6f7b99; }
.art .cells { align-items: flex-start; }
.art .cells button { width: 49px; font: 700 35px/46px "Noto Sans", sans-serif; }
.art .art-black { color: #000; text-shadow: 1px 2px 2px #bbb; }
.art .art-blue { color: #5b9bd5; text-shadow: 1px 2px 2px #ccc; }
.art .art-orange { color: #f8cbad; -webkit-text-stroke: 2px #ed7d31; }
.g-text { width: 340px; padding-left: 5px; }
.list { margin-left: 9px; width: 82px; }
.row-btn { display: flex; align-items: center; height: 25px; }
.row-btn + .row-btn { margin-top: -1px; }
.row-btn svg { margin-right: 4px; }
.ic-a { width: 14px; height: 16px; margin-right: 6px; border-bottom: 3px solid #2e75b6; font: 300 15px/12px "Open Sans", sans-serif; }
.ic-a.line { border-color: #000; color: #fff; -webkit-text-stroke: 1px #2b3648; font-weight: 700; }
.effect-wrap { position: relative; }
.effect { width: 68px; background: #dde1e6; border-radius: 2px; }
.hollow { height: 22px; margin-left: -4px; font: 700 28px/22px "Noto Sans", sans-serif; color: #dde1e6; -webkit-text-stroke: 1px #2b3648; filter: drop-shadow(3px 0 0 #bcc2cc); }
.g-shape { width: 340px; padding-left: 5px; }
.abc .cells { gap: 8px; padding-left: 4px; }
.abc .cells button { width: 44px; height: 40px; border: 2px solid #4a4a4a; border-radius: 7px; font-size: 11px; color: #000; background: #fff; }
.abc .cells .b { border-color: #74a9dc; }
.abc .cells .o { border-color: #f09a60; }
.shape-effect { margin-left: 4px; }

/* drop-down menus */
.menu { position: absolute; left: 0; top: 51px; width: 145px; padding: 1px; background: #fff; border: 1px solid #d3d6db; box-shadow: 1px 2px 4px #c8cbd1; }
.menu > button { display: flex; align-items: center; width: 100%; height: 28px; padding: 0 7px 0 8px; }
.menu > button.hover { background: #e7eaef; }
.menu > button .arrow { margin-left: auto; }
.menu hr { margin: 3px 1px; border: 0; border-top: 1px solid #dfe1e5; }
.m-a { width: 16px; margin-right: 9px; text-align: center; font: 700 20px/18px "Noto Sans", sans-serif; color: #fff; -webkit-text-stroke: 1px #2b3648; }
.shade { filter: drop-shadow(1px 1px 0 #bbb); }
.refl { color: #e7eaef; font-size: 17px; -webkit-box-reflect: below -5px linear-gradient(transparent 60%, #0006); }
.glow { filter: drop-shadow(1px 0 0 #8b93a3) drop-shadow(-1px 0 0 #8b93a3); }
.rot { filter: drop-shadow(1px 0 0 #2b3648); }
.m-ab { width: 16px; margin-right: 9px; font-size: 14px; line-height: 14px; border-bottom: 1px solid #2b3648; }
.submenu { position: absolute; left: 142px; top: 27px; width: 199px; padding: 2px 2px 8px 1px; background: #fff; border: 1px solid #e0e2e6; box-shadow: 1px 2px 4px #c8cbd1; }
.submenu h3 { margin: 0; height: 27px; padding-left: 9px; background: #f3f4f6; font-size: 12px; line-height: 26px; font-weight: 400; color: #434d60; }
.none-row { height: 66px; padding: 8px 0 0 5px; }
.variants { display: grid; grid-template-columns: repeat(3, 62px); grid-auto-rows: 57px; padding: 4px 0 0 4px; }
.cell { display: flex; justify-content: center; padding-top: 9px; width: 61px; height: 57px; }
.cell span { height: 30px; font: 700 29px/30px "Noto Sans", sans-serif; color: transparent; background: linear-gradient(#fff 30%, #ccdaf8 80%); -webkit-background-clip: text; background-clip: text; -webkit-text-stroke: 1px #b9c8ec; }
.picked { background: #dde1e6; }
.r1 span { -webkit-box-reflect: below -10px linear-gradient(transparent 45%, #000a); }
.r2 span { -webkit-box-reflect: below -10px linear-gradient(transparent 25%, #000b); }
.r3 span { -webkit-box-reflect: below -10px linear-gradient(transparent 0%, #000d); }

/* workbook */
.workspace { flex: 1; min-height: 0; display: flex; border-bottom: 1px solid #e0e2e7; }
.book { flex: 1; min-width: 0; display: flex; flex-direction: column; }
.formula-bar { display: flex; align-items: center; height: 44px; padding: 4px 1px 0 8px; }
.name-box { width: 149px; height: 24px; padding-right: 3px; border: 1px solid #d9dce1; border-radius: 2px; background: #fff; font-size: 14px; }
.name-box select { text-align: center; text-align-last: center; }
.fx-tools { display: flex; align-items: center; gap: 9px; margin-left: 46px; color: #b0b4bc; }
.fx { width: 24px; font: italic 19px/20px "Liberation Serif", serif; }
.formula { flex: 1; min-width: 0; height: 24px; border: 1px solid #d9dce1; border-radius: 2px; background: #fff; }
.sheet-row { flex: 1; min-height: 0; display: flex; }
.sheet { flex: 1; min-width: 0; display: flex; flex-direction: column; }
.outline { display: flex; height: 35px; border-bottom: 1px solid #a9b4d0; }
.levels { display: flex; flex-direction: column; gap: 1px; width: 34px; padding: 2px 0 0 9px; border-right: 1px solid #a9b4d0; }
.levels button, .minus { width: 15px; height: 14px; border: 1px solid #a9b4d0; border-top-color: #fff; border-left-color: #fff; font-size: 11px; line-height: 12px; color: #000; }
.bracket-area { position: relative; display: flex; padding: 2px 0 0 73px; }
.bracket { width: 220px; height: 5px; margin-top: 2px; border: solid #000; border-width: 2px 0 0 2px; }
.minus { font-weight: 700; line-height: 10px; }
.pt { position: absolute; top: 19px; width: 2px; height: 2px; background: #000; }
.pt-b { left: 108px; }
.pt-c { left: 204px; }
.grid-wrap { position: relative; flex: 1; min-height: 0; overflow: hidden; background: #fff; }
.grid { table-layout: fixed; width: 1089px; border-collapse: separate; border-spacing: 0; }
.grid th, .grid td { height: 18px; padding: 0; overflow: hidden; border: solid #c3cae0; border-width: 0 1px 1px 0; line-height: 17px; white-space: nowrap; }
.grid th { background: #f5f6f8; font-size: 14px; font-weight: 400; color: #1b2230; border-right-color: #a9b4d0; }
.grid thead th { width: 72px; height: 22px; border-bottom-color: #a9b4d0; border-right-color: #c3cae0; line-height: 21px; }
.grid thead .all { width: 34px; background: linear-gradient(135deg, transparent 50%, #b9bcc2 50%) 18px 6px / 11px 11px no-repeat #f5f6f8; }
.grid thead .col-C { width: 119px; }
.grid td { font: 15px/17px "Liberation Sans", "Noto Sans CJK SC", sans-serif; font-weight: 300; text-align: center; color: #000; }
.grid .num { padding-top: 4px; font: 13px/13px "Liberation Mono", monospace; }
.grid .right { text-align: right; padding-right: 2px; }
.grid .title td { color: #f00; }

/* selected drawing object */
.shape { position: absolute; left: 396px; top: 158px; width: 503px; height: 137px; border: 1px dashed #ccc; }
.selection { position: absolute; left: 10px; top: 4px; width: 482px; height: 125px; background: #0000003b; }
.wordart { position: absolute; left: 10px; top: 7px; font: 96px/96px "Noto Sans CJK SC", sans-serif; color: #5b7f9f; white-space: nowrap; text-shadow: 0 -1px 1px #3f5c78; -webkit-box-reflect: below -12px linear-gradient(transparent 35%, #0009); }
.stem { position: absolute; left: 250px; top: -16px; width: 1px; height: 14px; background: #333; }
.rotate { position: absolute; left: 240px; top: -36px; }
.knob { position: absolute; width: 12px; height: 12px; border: 1px solid #555; border-radius: 50%; background: #fff; }
.tl { left: -7px; top: -7px; }
.tc { left: 244px; top: -7px; }
.ml { left: -7px; top: 61px; }
.bl { left: -7px; bottom: -7px; }
.bc { left: 244px; bottom: -7px; }
.br { right: -7px; bottom: -7px; }
.float-tools { position: absolute; left: 514px; top: 67px; display: flex; flex-direction: column; gap: 12px; }
.float-tools button { display: grid; place-items: center; width: 27px; height: 27px; background: #fff; border: 1px solid #e3e5e8; box-shadow: 1px 1px 4px #ccc; }

.vscroll { width: 17px; padding: 5px 0 0 3px; display: flex; flex-direction: column; }
.split { width: 10px; height: 4px; margin: 0 2px; border: solid #9aa5bf; border-width: 1px 0; }
.vscroll .track { flex: 1; display: flex; flex-direction: column; align-items: center; margin-top: 5px; padding: 8px 0 7px; background: #e9ebf0; }
.vscroll .thumb { flex: 1; width: 12px; margin: 9px 0 33px; border-radius: 6px; background: #d5d8e1; }
.sheet-tabs { display: flex; align-items: center; height: 22px; border-top: 1px solid #e0e2e7; }
.navs { display: flex; gap: 16px; padding-left: 15px; width: 120px; }
.sheet-tab { align-self: stretch; width: 73px; background: #fff; border: solid #e0e2e7; border-width: 0 1px; color: #1fb978; font-weight: 700; }
.add-sheet { margin-left: 4px; }
.hscroll { display: flex; align-items: center; gap: 6px; width: 437px; margin-left: auto; margin-right: 23px; }
.hscroll .track { flex: 1; display: flex; align-items: center; height: 14px; padding: 0 7px; background: #e9ebf0; }
.hscroll .thumb { flex: 1; height: 12px; margin: 0 37px 0 10px; border-radius: 6px; background: #d5d8e1; }
.grip { width: 3px; height: 10px; border: solid #8a94aa; border-width: 0 1px; }

/* property panel */
.panel { width: 262px; border-left: 1px solid #e0e2e7; border-right: 1px solid #e0e2e7; }
.panel-head { display: flex; align-items: center; justify-content: space-between; height: 31px; padding: 0 8px 0 9px; }
.panel-head .caret { margin-left: 4px; }
.panel-acts { display: flex; align-items: center; gap: 12px; }
.panel-tabs { display: flex; height: 31px; padding-top: 2px; border-bottom: 1px solid #dfe2e6; }
.panel-tabs button { width: 92px; margin-left: 10px; color: #434d60; }
.panel-tabs .active { height: 29px; margin-left: 0; border: 1px solid #dfe2e6; border-bottom: 0; background: #f5f6f8; font-weight: 700; color: #1b2230; }
.sub-tabs { display: flex; gap: 20px; margin: 0 10px; padding: 5px 0 0 4px; border-bottom: 1px solid #e0e2e7; }
.sub-tabs button { display: flex; flex-direction: column; align-items: center; gap: 6px; height: 48px; color: #7a849c; }
.sub-tabs .active { width: 32px; margin-left: 4px; color: #17a673; font-weight: 700; border-bottom: 2px solid #17a673; }
.sub-tabs .frame { margin-left: 4px; }
.thin-a { width: 18px; height: 20px; font: 300 20px/18px "Open Sans", sans-serif; color: #2b3648; border-bottom: 3px double #4a7fd8; }
.thin-a.dashes { border-bottom: 2px dashed #6f9be8; }
.prop { display: flex; align-items: center; height: 55px; padding: 0 18px 0 13px; }
.prop.last { height: 69px; }
.props { padding-top: 2px; }
.tri { width: 0; height: 0; margin-right: 7px; border: 5px solid transparent; border-left: 5px solid #1b2536; border-right: 0; }
.tri.hidden { visibility: hidden; }
.pick { position: relative; display: flex; align-items: center; justify-content: flex-end; width: 110px; height: 25px; margin-left: auto; padding: 0 4px 0 9px; border: 1px solid #d9dce1; border-radius: 2px; background: #fff; }
.pick select { padding-right: 12px; text-align: center; text-align-last: center; }
.pick.tall { width: 84px; height: 39px; font-size: 10px; font-weight: 500; gap: 17px; color: #111; }
.sw { align-self: flex-start; width: 84px; height: 11px; margin: 2px 5px 0 0; border-radius: 2px; }
.sw-shadow { background: #c9d8f2; box-shadow: inset -3px 4px 5px #5b6274; }
.sw-refl { background: #cfdcf7; box-shadow: 0 4px 4px #eef3fc; }

/* tool rail */
.rail { display: flex; flex-direction: column; align-items: center; gap: 4px; width: 43px; padding: 11px 1px 0 0; }
.handle { width: 20px; height: 4px; margin-bottom: 9px; border: solid #c6c9d0; border-width: 1px 0; }
.rail button { display: grid; place-items: center; width: 32px; height: 32px; border-radius: 2px; }
.rail .on { background: #dde0e6; }
.rail-end { display: flex; justify-content: center; width: 35px; margin-top: auto; padding: 21px 0 15px; border-top: 1px solid #e0e2e7; }

/* bottom bars */
.status { display: flex; height: 13px; overflow: hidden; }
.rec { margin: 6px 14px 0 16px; }
.status .vline { margin-top: 6px; }
.views { display: flex; gap: 4px; margin-left: auto; padding-right: 15px; }
.views > svg { margin-top: 7px; }
.views .cross { margin-left: 3px; }
.views .cross + .vline { margin: 6px 6px 0 19px; }
.views .view + .vline { margin: 6px 8px 0 6px; }
.view { width: 23px; padding: 5px 3px 0 4px; height: 20px; margin-top: 1px; }
.view.on { background: #dde1e6; }
.zoom { width: 32px; margin-top: 5px; }
.views .slider { margin-left: 102px; }
.views .plus { margin-left: 70px; }
.views .full { margin-left: 10px; }
.taskbar { display: flex; height: 15px; padding-left: 23px; overflow: hidden; background: linear-gradient(90deg, #35312e 500px, #3a4652 740px, #3e4042 1000px, #2e2b28 1200px); color: #fff; }
.task { display: flex; flex: none; width: 140px; padding: 8px 0 0 8px; gap: 10px; }
.task.sun, .task.paint { gap: 28px; }
.task.paint { gap: 48px; }
.task span { margin-top: 3px; white-space: nowrap; }
.current { background: linear-gradient(90deg, #5b5b5a, #5e6874); }
.tray { display: flex; margin-left: auto; gap: 28px; }
.tray time { width: 29px; margin-top: 2px; overflow: hidden; line-height: 16px; }

/* overlays */
.activate { position: absolute; right: 15px; bottom: 64px; display: flex; flex-direction: column; width: 198px; color: #a9acb0; white-space: nowrap; pointer-events: none; }
.activate strong { font-size: 20px; line-height: 28px; font-weight: 400; }
.activate span { font-size: 15px; line-height: 20px; }
.site-mark { position: absolute; z-index: 6; right: 10px; bottom: 8px; display: flex; align-items: center; pointer-events: none; }
.site-mark div { display: flex; flex-direction: column; width: 106px; }
.site-mark strong { font-size: 21px; line-height: 24px; color: #5f9ad6; white-space: nowrap; }
.site-mark span { font: 700 15px/18px "Noto Sans", sans-serif; color: #47b06c; }
.arrows { position: absolute; z-index: 10; left: 0; top: 0; width: 100%; height: 100%; pointer-events: none; filter: drop-shadow(2px 3px 2px #0007); }
```
